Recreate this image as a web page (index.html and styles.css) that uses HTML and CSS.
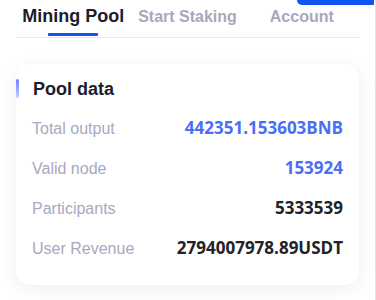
FILE: index.html
```html
<!DOCTYPE html>
<html lang="en">
<head>
  <meta charset="UTF-8">
  <meta name="viewport" content="width=device-width, initial-scale=1.0">
  <title>Mining Pool</title>
  <link rel="stylesheet" href="styles.css">
</head>
<body>

<div class="page">
  <div class="topbar">
    <div class="top-button"></div>
  </div>

  <!-- Tabs -->
  <div class="tabs">
    <div class="tab active">
      <span class="tab-label">Mining Pool</span>
      <span class="tab-bar"></span>
    </div>
    <div class="tab">
      <span class="tab-label">Start Staking</span>
    </div>
    <div class="tab">
      <span class="tab-label">Account</span>
    </div>
  </div>

  <!-- Pool data card -->
  <div class="card">
    <div class="card-title">Pool data</div>
    <div class="row">
      <span class="label">Total output</span>
      <span class="value blue">442351.153603BNB</span>
    </div>
    <div class="row">
      <span class="label">Valid node</span>
      <span class="value blue">153924</span>
    </div>
    <div class="row">
      <span class="label">Participants</span>
      <span class="value">5333539</span>
    </div>
    <div class="row">
      <span class="label">User Revenue</span>
      <span class="value">2794007978.89USDT</span>
    </div>
  </div>
</div>

</body>
</html>
```

FILE: styles.css
```css
body {
  margin: 0;
  padding: 0;
  font-family: 'Liberation Sans', Arial, sans-serif;
  background: #fff;
}

.page {
  width: 376px;
  min-height: 300px;
  border-right: 1px solid #e4e4e8;
  padding: 0 16px;
  box-sizing: border-box;
}

/* top blue button, cut off by the window */
.topbar {
  display: flex;
  justify-content: flex-end;
  height: 5px;
  margin-right: -15px;
}

.top-button {
  width: 77px;
  height: 5px;
  background: #1253f4;
  border-bottom-left-radius: 6px;
}

/* Tabs */
.tabs {
  display: flex;
  align-items: baseline;
  border-bottom: 1px solid #e8e8ee;
}

.tab {
  flex: 1;
  display: flex;
  flex-direction: column;
  align-items: center;
}

.tab-label {
  line-height: 22px;
  font-size: 16px;
  font-weight: bold;
  color: #a7a7bd;
  white-space: nowrap;
}

.tab.active .tab-label {
  font-size: 18px;
  color: #1c1c2c;
}

.tab-bar {
  width: 50px;
  height: 3px;
  margin: 6px 0 1px;
  background: #1253f4;
  border-radius: 1px;
}

/* Card */
.card {
  margin-top: 26px;
  padding: 15px 16px 16px;
  background: #fff;
  border-radius: 14px;
  box-shadow: 0 4px 18px rgba(0, 0, 0, 0.07);
}

.card-title {
  position: relative;
  margin-left: 1px;
  margin-bottom: 10px;
  font-size: 18px;
  line-height: 20px;
  font-weight: bold;
  color: #1c1c2c;
}

.card-title::before {
  content: '';
  position: absolute;
  left: -17px;
  top: 0;
  width: 3px;
  height: 19px;
  border-radius: 2px;
  background: linear-gradient(#6a7cff, #c8d0ff);
}

.row {
  display: flex;
  justify-content: space-between;
  align-items: baseline;
  line-height: 40px;
}

.label {
  font-size: 16px;
  color: #a8a8bf;
}

.value {
  font-family: 'Open Sans', 'Noto Sans', sans-serif;
  font-size: 17px;
  line-height: 20px;
  font-weight: bold;
  color: #222228;
}

.value.blue {
  color: #4a6ef5;
}
```
